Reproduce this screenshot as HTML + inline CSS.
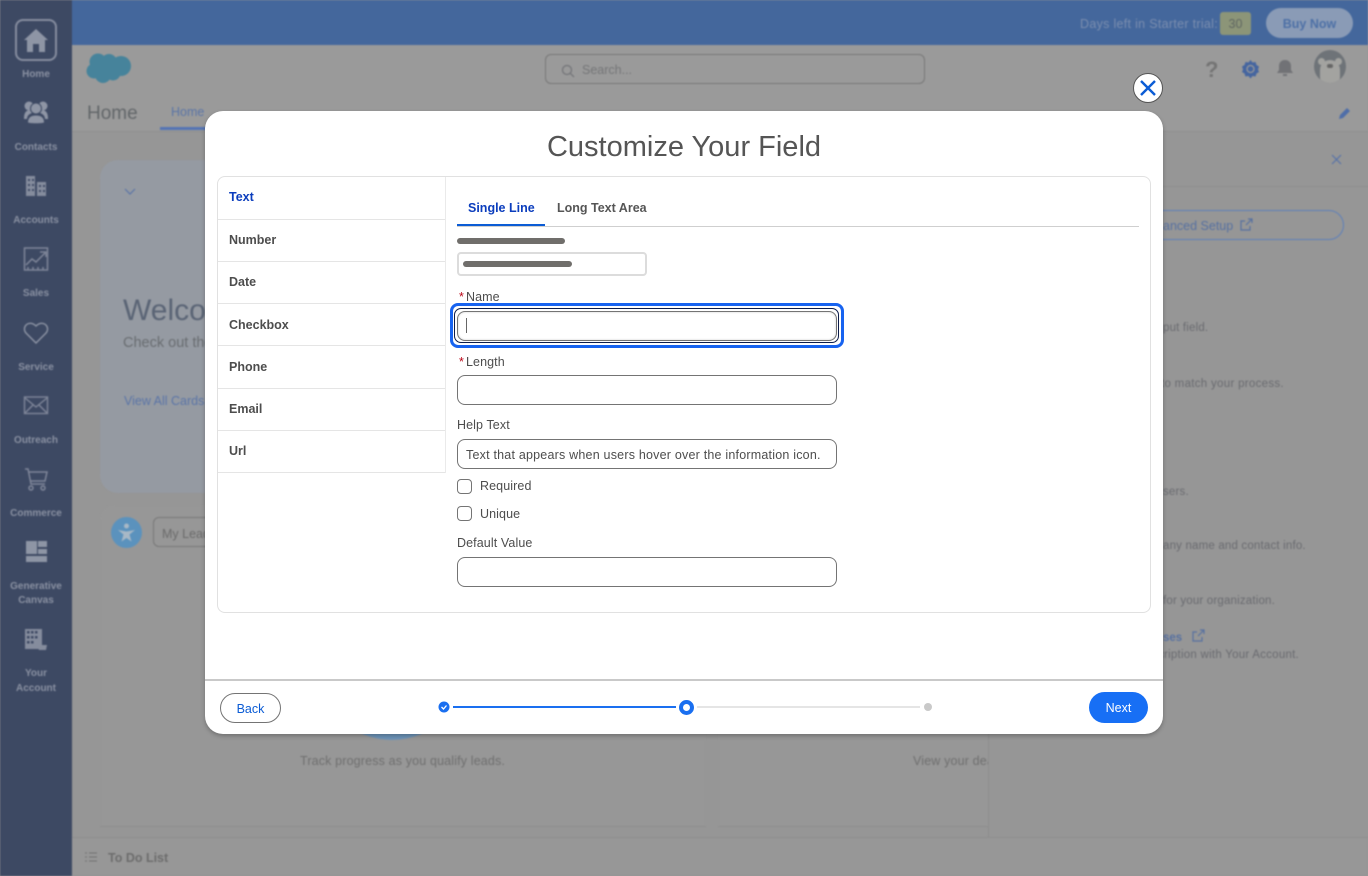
<!DOCTYPE html>
<html><head><meta charset="utf-8">
<style>
*{box-sizing:border-box;margin:0;padding:0}
html,body{width:1368px;height:876px;overflow:hidden;background:#969696;font-family:"Liberation Sans",sans-serif}
.a{position:absolute;white-space:nowrap}
#bg{position:absolute;left:0;top:0;width:1368px;height:876px;filter:blur(.7px);overflow:hidden}
.nl{position:absolute;left:0;width:72px;text-align:center;font-size:10px;font-weight:bold;color:#8a91a2;line-height:14px}
.ic{position:absolute;left:0;width:72px;height:36px}
.t{color:#696a6f;font-size:11.5px;letter-spacing:.18px}
.m{position:absolute;background:#fff}
.tab{position:absolute;left:218px;width:227px;border-bottom:1.5px solid #e5e5e5;font-size:12.5px;font-weight:bold;color:#4d4d4d;padding-left:11px}
.lab{position:absolute;font-size:12.5px;color:#4d4d4d;white-space:nowrap;letter-spacing:.1px}
.lab i{color:#ba0517;font-style:normal;margin-right:2px}
.in{position:absolute;left:457px;width:380px;height:30px;border:1px solid #747474;border-radius:8px;background:#fff;font-size:12.5px;color:#4d4d4d;line-height:30px;padding-left:8px;white-space:nowrap;letter-spacing:.21px}
.cb{position:absolute;left:457px;width:15px;height:15px;border:1px solid #747474;border-radius:4px;background:#fff}
</style></head>
<body>
<div id="bg">
  <div class="a" style="left:72px;top:0;width:1296px;height:45px;background:#44679c"></div>
  <div class="a" style="left:72px;top:45px;width:1296px;height:87px;background:#9a9a9a;border-bottom:1px solid #8f8f8f"></div>
  <div class="a" style="left:0;top:0;width:72px;height:876px;background:#3d4963"></div>

  <!-- sidebar -->
  <div class="a" style="left:15px;top:19px;width:42px;height:42px;border:2px solid #868d9f;border-radius:8px"></div>
  <svg class="ic" style="top:22px" viewBox="0 0 72 36"><path d="M36 7L24 18h3v12h6v-8h6v8h6V18h3z" fill="#8e95a5"/></svg>
  <div class="nl" style="top:68px">Home</div>
  <svg class="ic" style="top:95px" viewBox="0 0 72 36"><g fill="#8e95a5"><circle cx="29" cy="11" r="4.500"/><circle cx="43" cy="11" r="4.500"/><path d="M24 24c0-5 1-8 5-9 2 1 3 2 3 3-3 1-5 3-5 6zM48 24c0-5-1-8-5-9-2 1-3 2-3 3 3 1 5 3 5 6z"/><circle cx="36" cy="13.500" r="5.500" stroke="#3d4963" stroke-width="1"/><path d="M28 27.500c0-5 3-7 8-7s8 2 8 7c-3 1-13 1-16 0z"/></g></svg>
  <div class="nl" style="top:141px">Contacts</div>
  <svg class="ic" style="top:168px" viewBox="0 0 72 36"><g fill="#858c9d"><rect x="26" y="8" width="9" height="20"/><rect x="37" y="14" width="9" height="14"/></g><g fill="#3d4963"><rect x="28" y="11" width="2" height="2"/><rect x="32" y="11" width="2" height="2"/><rect x="28" y="16" width="2" height="2"/><rect x="32" y="16" width="2" height="2"/><rect x="28" y="21" width="2" height="2"/><rect x="32" y="21" width="2" height="2"/><rect x="39" y="17" width="2" height="2"/><rect x="43" y="17" width="2" height="2"/><rect x="39" y="22" width="2" height="2"/><rect x="43" y="22" width="2" height="2"/></g></svg>
  <div class="nl" style="top:214px">Accounts</div>
  <svg class="ic" style="top:241px" viewBox="0 0 72 36"><g fill="none" stroke="#7f8699" stroke-width="1.500"><rect x="24.500" y="7" width="23" height="22"/><path d="M26 24l6-6 4 3 9-9M40 11h6v5"/><path d="M28 29v-3M33 29v-3M38 29v-3M43 29v-3"/></g></svg>
  <div class="nl" style="top:287px">Sales</div>
  <svg class="ic" style="top:314px" viewBox="0 0 72 36"><path d="M36 29L26 19c-5-6 3-14 10-7 7-7 15 1 10 7z" fill="none" stroke="#8e95a5" stroke-width="1.400"/></svg>
  <div class="nl" style="top:361px">Service</div>
  <svg class="ic" style="top:387px" viewBox="0 0 72 36"><g fill="none" stroke="#7f8699" stroke-width="1.400"><rect x="24.500" y="10" width="23" height="16.500"/><path d="M25 11l11 9 11-9M25 26l8-8M47 26l-8-8"/></g></svg>
  <div class="nl" style="top:434px">Outreach</div>
  <svg class="ic" style="top:460px" viewBox="0 0 72 36"><g fill="none" stroke="#7f8699" stroke-width="1.500"><path d="M25 9h3l3 15h14M29 12h18l-2 9H31"/><circle cx="31" cy="28" r="2"/><circle cx="43" cy="28" r="2"/></g></svg>
  <div class="nl" style="top:507px">Commerce</div>
  <svg class="ic" style="top:533px" viewBox="0 0 72 36"><g fill="#8e95a5"><rect x="26" y="8" width="11" height="13"/><rect x="38" y="8" width="9" height="6"/><rect x="38" y="16" width="9" height="5"/><rect x="26" y="23" width="21" height="6"/></g></svg>
  <div class="nl" style="top:580px">Generative</div>
  <div class="nl" style="top:594px">Canvas</div>
  <svg class="ic" style="top:622px" viewBox="0 0 72 36"><rect x="25" y="7" width="17" height="20" fill="#858c9d"/><g fill="#3d4963"><rect x="27" y="9" width="2.500" height="2.500"/><rect x="31" y="9" width="2.500" height="2.500"/><rect x="35" y="9" width="2.500" height="2.500"/><rect x="27" y="14" width="2.500" height="2.500"/><rect x="31" y="14" width="2.500" height="2.500"/><rect x="35" y="14" width="2.500" height="2.500"/><rect x="27" y="19" width="2.500" height="2.500"/><rect x="31" y="19" width="2.500" height="2.500"/></g><path d="M37 23h10l-1 5h-7z" fill="#858c9d"/></svg>
  <div class="nl" style="top:667px">Your</div>
  <div class="nl" style="top:682px">Account</div>

  <!-- top bar -->
  <div class="a" style="left:1080px;top:17px;font-size:12.5px;color:#7b8eaf;letter-spacing:.3px">Days left in Starter trial:</div>
  <div class="a" style="left:1220px;top:12px;width:31px;height:23px;background:#8c9578;border-radius:3px;color:#5f6661;font-size:12.500px;text-align:center;line-height:25px">30</div>
  <div class="a" style="left:1266px;top:8px;width:87px;height:30px;background:#8a9bb6;border-radius:15px;color:#4d70a6;font-size:12.5px;font-weight:bold;text-align:center;line-height:32px">Buy Now</div>

  <!-- header -->
  <svg class="a" style="left:86px;top:53px" width="46" height="32" viewBox="0 0 46 32"><g fill="#46839b"><rect x="8" y="8" width="28" height="14"/><circle cx="12" cy="9" r="8.500"/><circle cx="23" cy="9" r="8"/><circle cx="35" cy="13" r="10"/><circle cx="8" cy="18" r="7.500"/><circle cx="17" cy="22" r="8"/><circle cx="27" cy="20" r="7.500"/></g></svg>
  <div class="a" style="left:545px;top:54px;width:380px;height:30px;border:1px solid #777;border-radius:6px;background:#9a9a9a"></div>
  <svg class="a" style="left:560px;top:63px" width="16" height="16" viewBox="0 0 16 16"><circle cx="7" cy="7" r="4.500" fill="none" stroke="#717276" stroke-width="1.200"/><path d="M10.500 10.500L14 14" stroke="#717276" stroke-width="1.200"/></svg>
  <div class="a t" style="left:582px;top:63px;font-size:12.500px;color:#747577;letter-spacing:0">Search...</div>
  <div class="a" style="left:1205px;top:57px;font-size:22px;font-weight:bold;color:#747474;line-height:26px">?</div>
  <svg class="a" style="left:1240px;top:58px" width="21" height="22" viewBox="0 0 21 22"><path d="M10.500 2l2 2.500 3-.5 1 3 2.500 1.500-1 3 1 2.500-2.500 1.500-1 3-3-.5-2 2.500-2-2.500-3 .5-1-3L2 14l1-2.500-1-3L4.500 7l1-3 3 .5z" fill="#45659f"/><circle cx="10.500" cy="11" r="3.500" fill="none" stroke="#9a9a9a" stroke-width="1.300"/></svg>
  <svg class="a" style="left:1275px;top:58px" width="20" height="21" viewBox="0 0 20 21"><path d="M10 2c-4 0-6 3-6 6v4l-2 3h16l-2-3V8c0-3-2-6-6-6z" fill="#717276"/><rect x="8" y="16" width="4" height="2" fill="#717276"/></svg>
  <div class="a" style="left:1314px;top:50px;width:32px;height:33px;border-radius:50%;background:#6e7378;overflow:hidden"><div style="position:absolute;left:6px;top:10px;width:20px;height:27px;border-radius:10px;background:#a3a3a0"></div><div style="position:absolute;left:4px;top:8px;width:7px;height:7px;border-radius:4px;background:#a3a3a0"></div><div style="position:absolute;left:21px;top:8px;width:7px;height:7px;border-radius:4px;background:#a3a3a0"></div><div style="position:absolute;left:13px;top:14px;width:6px;height:4px;border-radius:2px;background:#666"></div></div>

  <div class="a" style="left:87px;top:102px;font-size:19px;color:#626669;line-height:24px">Home</div>
  <div class="a" style="left:171px;top:105px;font-size:12.5px;color:#5a74a6">Home</div>
  <div class="a" style="left:160px;top:127px;width:60px;height:3px;background:#5474b4"></div>
  <svg class="a" style="left:1338px;top:106px" width="14" height="14" viewBox="0 0 14 14"><path d="M1 13l1-4 7-7 3 3-7 7z" fill="#4f6ea8"/></svg>

  <!-- cards left -->
  <div class="a" style="left:100px;top:160px;width:130px;height:333px;background:#959aa2;border-radius:18px"></div>
  <svg class="a" style="left:123px;top:187px" width="14" height="10" viewBox="0 0 14 10"><path d="M2 2l5 5 5-5" fill="none" stroke="#5a74a6" stroke-width="1.200"/></svg>
  <div class="a" style="left:123px;top:293px;font-size:30px;color:#5a6475;line-height:36px">Welcome</div>
  <div class="a" style="left:123px;top:335px;font-size:14.500px;color:#686c70">Check out the</div>
  <div class="a" style="left:124px;top:394px;font-size:12.5px;color:#5a74a6">View All Cards</div>
  <div class="a" style="left:100px;top:505px;width:606px;height:322px;background:#979797;border-radius:14px 14px 0 0;border-bottom:1px solid #8e8e8e"></div>
  <div class="a" style="left:718px;top:505px;width:300px;height:322px;background:#979797;border-bottom:1px solid #8e8e8e"></div>
  <div class="a" style="left:111px;top:517px;width:31px;height:31px;border-radius:50%;background:#5b92bd"></div>
  <svg class="a" style="left:111px;top:517px" width="31" height="31" viewBox="0 0 31 31"><circle cx="15.500" cy="9" r="2.500" fill="#a8b8c6"/><path d="M7 13l8.500 1.500L24 13l-5.500 4.500 2 7-5-3.500-5 3.500 2-7z" fill="#a8b8c6"/></svg>
  <div class="a" style="left:153px;top:517px;width:70px;height:30px;border:1px solid #777;border-radius:6px;font-size:12.5px;color:#6a6a6a;line-height:32px;padding-left:8px">My Leads</div>
  <div class="a" style="left:317px;top:590px;width:150px;height:150px;background:#6c93b8;border-radius:50%"></div>
  <div class="a t" style="left:300px;top:754px;font-size:12.500px;color:#6e6e6e;letter-spacing:.15px">Track progress as you qualify leads.</div>
  <div class="a t" style="left:913px;top:754px;font-size:12.500px;color:#6e6e6e;letter-spacing:.15px">View your deals</div>

  <!-- right panel -->
  <div class="a" style="left:988px;top:133px;width:380px;height:704px;background:#969696;border-left:1px solid #8d8d8d"></div>
  <div class="a" style="left:1160px;top:186px;width:208px;height:1px;background:#8d8d8d"></div>
  <svg class="a" style="left:1330px;top:153px" width="13" height="13" viewBox="0 0 13 13"><path d="M2 2l9 9M11 2l-9 9" stroke="#5572a8" stroke-width="1.200"/></svg>
  <div class="a" style="left:1100px;top:210px;width:244px;height:30px;border:1px solid #5c7fba;border-radius:15px"></div>
  <div class="a" style="left:1163px;top:219px;font-size:12.5px;color:#5670a0">anced Setup</div>
  <svg class="a" style="left:1239px;top:218px" width="14" height="14" viewBox="0 0 14 14"><path d="M6 3H2v9h9V8M7 7l6-6M9 1h4v4" fill="none" stroke="#5670a0" stroke-width="1.200"/></svg>
  <div class="a t" style="left:1163px;top:322px">put field.</div>
  <div class="a t" style="left:1161px;top:378px;letter-spacing:.3px">to match your process.</div>
  <div class="a t" style="left:1163px;top:486px">sers.</div>
  <div class="a t" style="left:1163px;top:540px">any name and contact info.</div>
  <div class="a t" style="left:1163px;top:595px">for your organization.</div>
  <div class="a" style="left:1163px;top:632px;font-size:11.500px;font-weight:bold;color:#5670a0">ses</div>
  <svg class="a" style="left:1191px;top:629px" width="14" height="14" viewBox="0 0 14 14"><path d="M6 3H2v9h9V8M7 7l6-6M9 1h4v4" fill="none" stroke="#5670a0" stroke-width="1.200"/></svg>
  <div class="a t" style="left:1158px;top:649px;letter-spacing:.25px">cription with Your Account.</div>

  <!-- footer -->
  <div class="a" style="left:72px;top:837px;width:1296px;height:39px;background:#979797;border-top:1px solid #8d8d8d"></div>
  <svg class="a" style="left:84px;top:850px" width="14" height="14" viewBox="0 0 14 14"><path d="M5 3h8M5 7h8M5 11h8M1 3h2M1 7h2M1 11h2" stroke="#707070" stroke-width="1"/></svg>
  <div class="a" style="left:108px;top:851px;font-size:12.5px;font-weight:bold;color:#6c6c6c">To Do List</div>
</div>

<!-- close -->
<div class="a" style="left:1133px;top:73px;width:30px;height:30px;background:#fff;border:1px solid #555;border-radius:50%"></div>
<svg class="a" style="left:1133px;top:73px" width="30" height="30" viewBox="0 0 30 30"><path d="M8 8l14 14M22 8L8 22" stroke="#0b5cd5" stroke-width="2.400"/></svg>

<!-- modal -->
<div class="m" style="left:205px;top:111px;width:958px;height:623px;border-radius:18px;box-shadow:0 2px 4px rgba(0,0,0,.25)"></div>
<div class="a" style="left:205px;top:128px;width:958px;text-align:center;font-size:29px;color:#555;line-height:38px">Customize Your Field</div>
<div class="a" style="left:217px;top:176px;width:934px;height:437px;border:1.500px solid #e1e1e1;border-radius:8px"></div>
<div class="a" style="left:445px;top:177px;width:1px;height:296px;background:#eaeaea"></div>

<div class="tab" style="top:177px;height:42.500px;line-height:41px;color:#0b3dbd">Text</div>
<div class="tab" style="top:219.500px;height:42px;line-height:40px">Number</div>
<div class="tab" style="top:261.500px;height:42.500px;line-height:40px">Date</div>
<div class="tab" style="top:304px;height:42px;line-height:43px">Checkbox</div>
<div class="tab" style="top:346px;height:42.500px;line-height:43px">Phone</div>
<div class="tab" style="top:388.500px;height:42px;line-height:40px">Email</div>
<div class="tab" style="top:430.500px;height:42.500px;line-height:40px">Url</div>

<div class="a" style="left:468px;top:201px;font-size:12.5px;font-weight:bold;color:#0b3dbd">Single Line</div>
<div class="a" style="left:557px;top:201px;font-size:12.5px;font-weight:bold;color:#555">Long Text Area</div>
<div class="a" style="left:457px;top:226px;width:682px;height:1px;background:#cfcfcf"></div>
<div class="a" style="left:457px;top:224px;width:88px;height:2px;background:#0b5cd5"></div>

<div class="a" style="left:457px;top:238px;width:108px;height:6px;border-radius:3px;background:#706e6b"></div>
<div class="a" style="left:457px;top:252px;width:190px;height:24px;border:2px solid #dcdcdc;border-radius:4px;background:#fff"></div>
<div class="a" style="left:463px;top:261px;width:109px;height:6px;border-radius:3px;background:#706e6b"></div>

<div class="lab" style="left:459px;top:290px"><i>*</i>Name</div>
<div class="a" style="left:450px;top:303px;width:394px;height:45px;border:3px solid #1763f0;border-radius:8px;background:#fff"></div>
<div class="in" style="left:454px;top:308px;width:385px;height:35px;border:1.500px solid #0c1c4a;border-radius:7px;background:#fff"></div>
<div class="in" style="top:311px;height:30px;box-shadow:inset 0 0 2px rgba(0,0,0,.2)"></div>
<div class="a" style="left:466px;top:318px;width:1px;height:15px;background:#666"></div>

<div class="lab" style="left:459px;top:355px"><i>*</i>Length</div>
<div class="in" style="top:375px"></div>
<div class="lab" style="left:457px;top:418px">Help Text</div>
<div class="in" style="top:439px">Text that appears when users hover over the information icon.</div>
<div class="cb" style="top:479px"></div>
<div class="lab" style="left:480px;top:479px">Required</div>
<div class="cb" style="top:506px"></div>
<div class="lab" style="left:480px;top:507px">Unique</div>
<div class="lab" style="left:457px;top:536px">Default Value</div>
<div class="in" style="top:557px"></div>

<!-- modal footer -->
<div class="a" style="left:205px;top:679px;width:958px;height:2px;background:#c9c9c9"></div>
<div class="a" style="left:220px;top:693px;width:61px;height:30px;border:1px solid #747474;border-radius:15px;background:#fff;color:#0b5cd5;font-size:12.5px;text-align:center;line-height:30px">Back</div>
<svg class="a" style="left:438px;top:701px" width="12" height="12" viewBox="0 0 12 12"><circle cx="6" cy="6" r="5.500" fill="#1a6ff0"/><path d="M3.500 6l2 2 3-3.500" fill="none" stroke="#fff" stroke-width="1.300"/></svg>
<div class="a" style="left:453px;top:706px;width:223px;height:2px;background:#1a6ff0"></div>
<div class="a" style="left:679px;top:700px;width:15px;height:15px;border:4px solid #1a6ff0;border-radius:50%;background:#fff"></div>
<div class="a" style="left:697px;top:706px;width:223px;height:2px;background:#e5e5e5"></div>
<div class="a" style="left:924px;top:703px;width:8px;height:8px;border-radius:50%;background:#c9c9c9"></div>
<div class="a" style="left:1089px;top:692px;width:59px;height:31px;border-radius:16px;background:#176ff5;color:#fff;font-size:12.5px;text-align:center;line-height:32px">Next</div>
</body></html>
